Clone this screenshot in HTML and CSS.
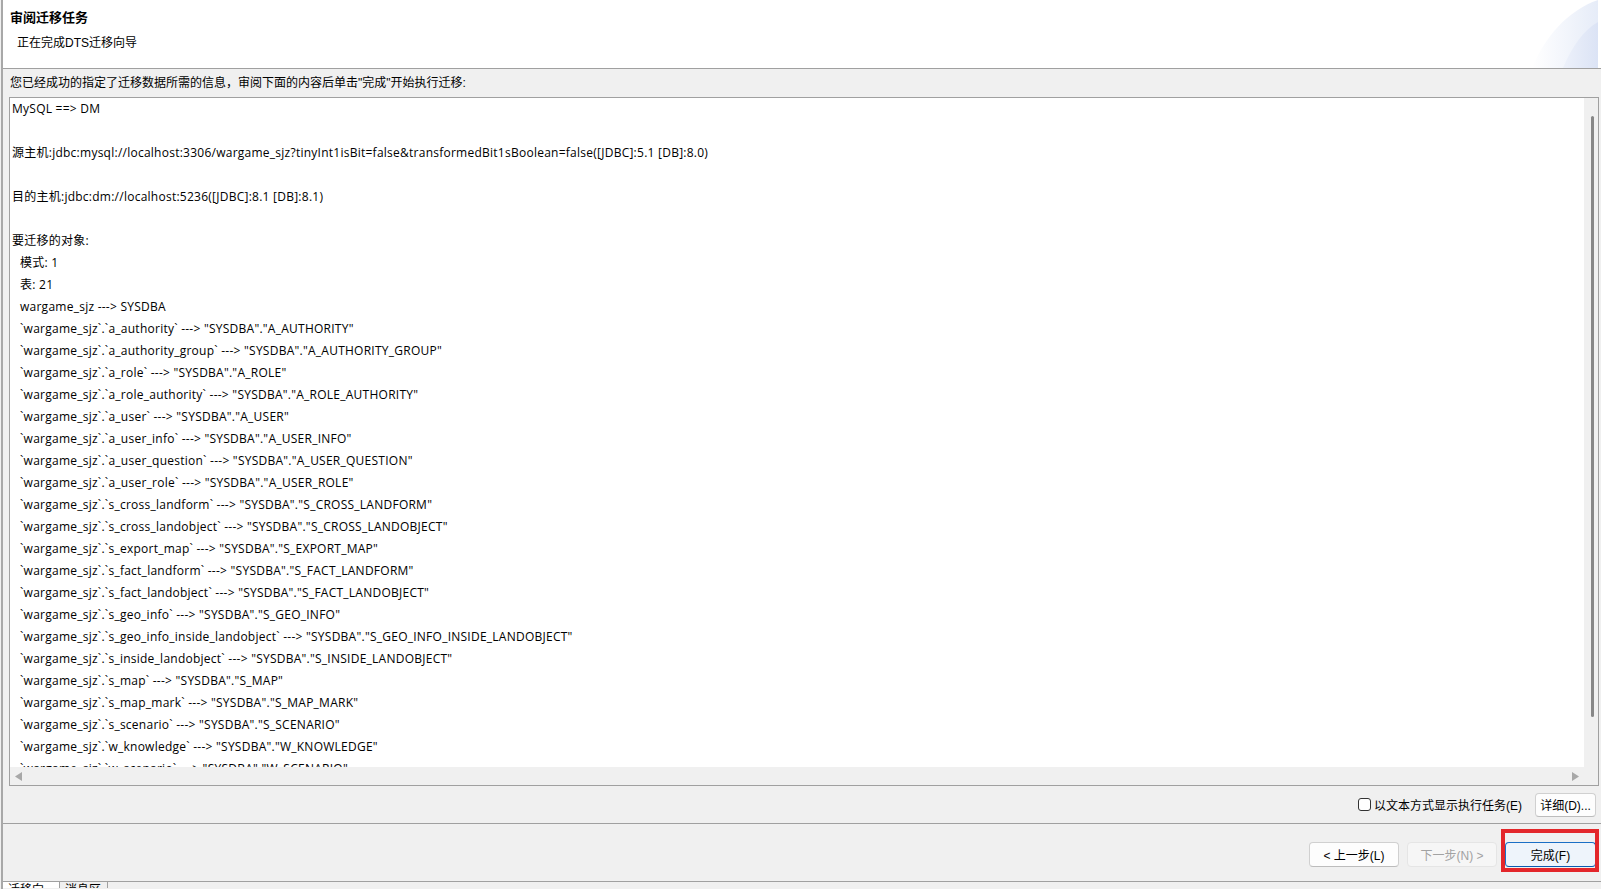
FILE: index.html
```html
<!DOCTYPE html>
<html lang="zh-CN">
<head>
    <meta charset="UTF-8">
    <title>审阅迁移任务</title>
    <link rel="stylesheet" href="styles.css">
</head>
<body>
<div class="wizard">
    <div class="wizard-head">
        <div class="head-text">
            <h1>审阅迁移任务</h1>
            <p>正在完成DTS迁移向导</p>
        </div>
        <svg class="head-art" width="68" height="68" viewBox="0 0 68 68">
            <defs>
                <linearGradient id="swoosh" x1="0" y1="0" x2="1" y2="0">
                    <stop offset="0" stop-color="#ffffff"/>
                    <stop offset="1" stop-color="#e6ecf8"/>
                </linearGradient>
                <linearGradient id="swoosh2" x1="0" y1="0" x2="1" y2="0">
                    <stop offset="0" stop-color="#edf1fa"/>
                    <stop offset="1" stop-color="#dbe3f5"/>
                </linearGradient>
            </defs>
            <path d="M2,68 C14,38 38,10 68,0 L68,68 Z" fill="url(#swoosh)"/>
            <path d="M33,68 C42,46 54,30 68,22 L68,68 Z" fill="url(#swoosh2)"/>
        </svg>
    </div>
    <div class="intro">您已经成功的指定了迁移数据所需的信息，审阅下面的内容后单击"完成"开始执行迁移:</div>
    <div class="summary">
        <div class="summary-main">
            <div class="summary-text">
                <div>MySQL ==&gt; DM</div>
                <div class="blank"></div>
                <div>源主机:jdbc:mysql://localhost:3306/wargame_sjz?tinyInt1isBit=false&amp;transformedBit1sBoolean=false([JDBC]:5.1 [DB]:8.0)</div>
                <div class="blank"></div>
                <div>目的主机:jdbc:dm://localhost:5236([JDBC]:8.1 [DB]:8.1)</div>
                <div class="blank"></div>
                <div>要迁移的对象:</div>
                <div class="in">模式: 1</div>
                <div class="in">表: 21</div>
                <div class="in">wargame_sjz ---&gt; SYSDBA</div>
                <div class="in">`wargame_sjz`.`a_authority` ---&gt; "SYSDBA"."A_AUTHORITY"</div>
                <div class="in">`wargame_sjz`.`a_authority_group` ---&gt; "SYSDBA"."A_AUTHORITY_GROUP"</div>
                <div class="in">`wargame_sjz`.`a_role` ---&gt; "SYSDBA"."A_ROLE"</div>
                <div class="in">`wargame_sjz`.`a_role_authority` ---&gt; "SYSDBA"."A_ROLE_AUTHORITY"</div>
                <div class="in">`wargame_sjz`.`a_user` ---&gt; "SYSDBA"."A_USER"</div>
                <div class="in">`wargame_sjz`.`a_user_info` ---&gt; "SYSDBA"."A_USER_INFO"</div>
                <div class="in">`wargame_sjz`.`a_user_question` ---&gt; "SYSDBA"."A_USER_QUESTION"</div>
                <div class="in">`wargame_sjz`.`a_user_role` ---&gt; "SYSDBA"."A_USER_ROLE"</div>
                <div class="in">`wargame_sjz`.`s_cross_landform` ---&gt; "SYSDBA"."S_CROSS_LANDFORM"</div>
                <div class="in">`wargame_sjz`.`s_cross_landobject` ---&gt; "SYSDBA"."S_CROSS_LANDOBJECT"</div>
                <div class="in">`wargame_sjz`.`s_export_map` ---&gt; "SYSDBA"."S_EXPORT_MAP"</div>
                <div class="in">`wargame_sjz`.`s_fact_landform` ---&gt; "SYSDBA"."S_FACT_LANDFORM"</div>
                <div class="in">`wargame_sjz`.`s_fact_landobject` ---&gt; "SYSDBA"."S_FACT_LANDOBJECT"</div>
                <div class="in">`wargame_sjz`.`s_geo_info` ---&gt; "SYSDBA"."S_GEO_INFO"</div>
                <div class="in">`wargame_sjz`.`s_geo_info_inside_landobject` ---&gt; "SYSDBA"."S_GEO_INFO_INSIDE_LANDOBJECT"</div>
                <div class="in">`wargame_sjz`.`s_inside_landobject` ---&gt; "SYSDBA"."S_INSIDE_LANDOBJECT"</div>
                <div class="in">`wargame_sjz`.`s_map` ---&gt; "SYSDBA"."S_MAP"</div>
                <div class="in">`wargame_sjz`.`s_map_mark` ---&gt; "SYSDBA"."S_MAP_MARK"</div>
                <div class="in">`wargame_sjz`.`s_scenario` ---&gt; "SYSDBA"."S_SCENARIO"</div>
                <div class="in">`wargame_sjz`.`w_knowledge` ---&gt; "SYSDBA"."W_KNOWLEDGE"</div>
                <div class="in">`wargame_sjz`.`w_scenario` ---&gt; "SYSDBA"."W_SCENARIO"</div>
            </div>
            <div class="vscroll"><div class="vthumb"></div></div>
        </div>
        <div class="hscroll-row">
            <div class="hscroll">
                <svg width="7" height="9" viewBox="0 0 7 9"><polygon points="7,0 7,9 0,4.5" fill="#a8a8a8"/></svg>
                <svg width="7" height="9" viewBox="0 0 7 9"><polygon points="0,0 0,9 7,4.5" fill="#a8a8a8"/></svg>
            </div>
            <div class="corner"></div>
        </div>
    </div>
    <div class="options">
        <label class="check"><span class="box"></span>以文本方式显示执行任务(E)</label>
        <button class="btn btn-detail">详细(D)...</button>
    </div>
    <div class="nav">
        <button class="btn btn-nav">&lt; 上一步(L)</button>
        <button class="btn btn-nav btn-disabled">下一步(N) &gt;</button>
        <button class="btn btn-nav btn-finish">完成(F)<span class="mark"></span></button>
    </div>
    <div class="tabs">
        <div class="tab tab-active">迁移向导</div>
        <div class="tab">消息区</div>
    </div>
</div>
</body>
</html>
```

FILE: styles.css
```css
html, body { margin: 0; padding: 0; }
body { background-color: #f0f0f0; font-family: "Liberation Sans", "Noto Sans CJK SC", sans-serif; font-size: 12px; color: #000; width: 1601px; height: 889px; overflow: hidden; }
.wizard { margin-left: 1px; border-left: 2px solid #a8a8a8; height: 889px; display: flex; flex-direction: column; }

.wizard-head { height: 68px; background-color: #fff; border-bottom: 1px solid #a0a0a0; display: flex; justify-content: space-between; flex-shrink: 0; }
.head-text { padding: 10px 0 0 7px; }
.head-text h1 { margin: 0; font-size: 13px; font-weight: bold; line-height: 16px; }
.head-text p { margin: 9px 0 0 7px; font-size: 12px; line-height: 16px; }
.head-art { margin-right: 3px; display: block; }

.intro { height: 28px; line-height: 28px; padding-left: 7px; flex-shrink: 0; }

.summary { margin: 0 2px 0 6px; border: 1px solid #a0a0a0; background-color: #f0f0f0; flex-shrink: 0; }
.summary-main { display: flex; height: 669px; }
.summary-text { flex: 1; background-color: #fff; overflow: hidden; padding-left: 2px; font-family: "Open Sans", "Noto Sans CJK SC", sans-serif; letter-spacing: 0.25px; line-height: 22px; }
.summary-text div { white-space: pre; height: 22px; }
.summary-text .in { padding-left: 8px; }
.vscroll { width: 14px; padding-top: 18px; box-sizing: border-box; }
.vthumb { width: 3px; height: 601px; margin-left: 7px; background-color: #878787; border-radius: 2px; }
.hscroll-row { display: flex; height: 18px; }
.hscroll { flex: 1; display: flex; justify-content: space-between; align-items: center; padding: 0 5px; }
.hscroll svg { display: block; }
.corner { width: 14px; }

.options { height: 37px; display: flex; justify-content: flex-end; align-items: center; padding-right: 5px; border-bottom: 1px solid #a0a0a0; flex-shrink: 0; }
.check { display: flex; align-items: center; gap: 3px; margin-right: 13px; }
.check .box { width: 11px; height: 11px; border: 1px solid #333; border-radius: 3px; background-color: #fff; }

.btn { height: 24px; box-sizing: border-box; border: 1px solid #d0d0d0; border-bottom-color: #bcbcbc; border-radius: 4px; background-color: #fdfdfd; font-family: inherit; font-size: 12px; color: #000; padding: 0; }
.btn-detail { width: 61px; }

.nav { height: 58px; box-sizing: border-box; border-bottom: 1px solid #a0a0a0; display: flex; justify-content: flex-end; align-items: flex-start; gap: 8px; padding: 18px 5px 0 0; flex-shrink: 0; }
.btn-nav { width: 90px; height: 25px; }
.btn-disabled { background-color: #f6f6f6; border-color: #e5e5e5; color: #a2a2a2; }
.btn-finish { width: 91px; position: relative; background-color: #eef4fb; border-color: #1b6fc5; border-bottom-color: #0a5bb0; }
.mark { position: absolute; left: -5px; right: -4px; top: -14px; bottom: -6px; border: 4px solid #e3262a; }

.tabs { height: 6px; display: flex; overflow: hidden; }
.tab { padding: 1px 6px 0 5px; line-height: 14px; border-right: 1px solid #a0a0a0; }
.tab-active { background-color: #fff; width: 45px; }
```
